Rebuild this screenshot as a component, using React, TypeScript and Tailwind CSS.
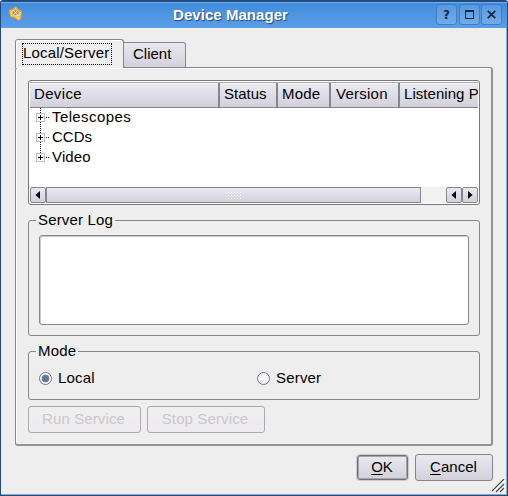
import type { ReactNode } from 'react';

const raised =
  'bg-linear-to-b from-[#e9e9f0] to-[#d2d1db]';

function TitleButton({ children, className = '' }: { children: ReactNode; className?: string }) {
  return (
    <button
      className={`flex h-[21px] w-[21px] items-center justify-center rounded-[3px] border border-[#3f7fc8] bg-linear-to-b from-[#5799e0] to-[#74abe8] ${className}`}
    >
      {children}
    </button>
  );
}

function AppIcon() {
  return (
    <svg width="16" height="17" viewBox="0 0 16 17" className="mt-px ml-[7px]">
      <path d="M1 5 5 3.500 7.500 1 11 4.500 14 6 13.500 13 11 16 6.500 13 2 11.500Z" fill="#f4a231" />
      <path d="m2 6 3-1-.5 4L2.500 10ZM7 3l2.500 2-3 1ZM10.500 6.500l2.500.5-.5 3-2-1ZM6.500 11l4.500.500 1.500 1-1.500 2.500-3-2Z" fill="#ffcc70" />
      <path d="M5 6.500 8 5l2.500 2.500L9 10 5.500 9.500Z" fill="#6f9bc8" />
      <path d="m3 10.500 3.500.5 6-1M5 5l5 5.500M10 5 6 9.500" fill="none" stroke="#ffe1a0" strokeWidth="1" />
    </svg>
  );
}

function Header({ label, width, className = '' }: { label: string; width: string; className?: string }) {
  return (
    <div className={`h-[25px] shrink-0 overflow-hidden whitespace-nowrap border-t border-b border-t-[#f9f9fb] border-b-[#85858b] leading-[20px] ${raised} ${width} ${className}`}>
      {label}
    </div>
  );
}

function TreeRow({ label, last = false, className = '' }: { label: string; last?: boolean; className?: string }) {
  return (
    <div className="flex h-5 items-center">
      <svg width="22" height="20" viewBox="0 0 22 20" shapeRendering="crispEdges">
        <path d={last ? 'M10.5 0v5' : 'M10.5 0v5M10.5 14v6'} stroke="#222" strokeDasharray="1 1" />
        <path d="M16 9.5h3" stroke="#222" strokeDasharray="1 1" />
        <path d="M6 5h9v9H6ZM7 6v7h7V6Z" fill="#bfbfbf" fillRule="evenodd" />
        <path d="M8 9h5v1H8ZM10 7h1v5h-1Z" fill="#000" />
      </svg>
      <span className={`-mt-[2px] leading-5 ${className}`}>{label}</span>
    </div>
  );
}

function ScrollButton({ right = false, className = '' }: { right?: boolean; className?: string }) {
  return (
    <button className={`flex h-4 w-4 shrink-0 items-center justify-center rounded-[2px] border border-[#85858b] ${raised} ${className}`}>
      <svg width="5" height="8" viewBox="0 0 5 8">
        <path d={right ? 'M0 0 4.5 4 0 8Z' : 'M5 0 .5 4 5 8Z'} />
      </svg>
    </button>
  );
}

function Radio({ label, checked = false }: { label: string; checked?: boolean }) {
  return (
    <label className="flex items-center">
      <svg width="13" height="13" viewBox="0 0 13 13">
        <circle cx="6.5" cy="6.5" r="6" fill="#f7f4f8" stroke="#76767d" />
        {checked && <circle cx="6.5" cy="6.5" r="3.7" fill="#62799a" />}
      </svg>
      <span className="ml-[6px] h-5 leading-[19px] tracking-[0.18px]">{label}</span>
    </label>
  );
}

export default function App() {
  return (
    <div className="flex h-[496px] w-[508px] flex-col overflow-hidden rounded-t-[3px] border border-t-2 border-[#204a80] bg-[#eeeeee] font-['Liberation_Sans',Arial,sans-serif] text-[15px] text-black">
      <header className="flex h-[26px] shrink-0 items-start border-t border-[#73ade9] bg-linear-to-b from-[#418cdc] to-[#5c9ee7] pt-px">
        <AppIcon />
        <h1 className="ml-[149px] w-[263px] whitespace-nowrap pt-px text-[15px] leading-5 font-bold tracking-[0.05px] text-white [text-shadow:1px_1px_1px_#204a80]">
          Device Manager
        </h1>
        <TitleButton>
          <span className="font-['DejaVu_Sans'] text-[12px] leading-4 font-bold text-[#102a47]">?</span>
        </TitleButton>
        <TitleButton className="ml-[2px]">
          <svg width="9" height="9" viewBox="0 0 9 9" shapeRendering="crispEdges">
            <path d="M0 0h9v9H0ZM1 2v6h7V2Z" fill="#102a47" fillRule="evenodd" />
          </svg>
        </TitleButton>
        <TitleButton className="ml-px">
          <svg width="9" height="9" viewBox="0 0 9 9">
            <path d="m.8.8 7.4 7.4m0-7.4L.8 8.2" stroke="#102a47" strokeWidth="1.8" />
          </svg>
        </TitleButton>
      </header>

      <div className="flex grow flex-col border-r border-b border-[#8ca9cc] pt-[11px] pl-[14px]">
        <nav className="z-10 flex h-[29px] shrink-0 items-start">
          <div className="h-[29px] w-[109px] rounded-t-[3px] border border-b-0 border-[#85858b] bg-[#eeeeee] pt-[3px] pl-[6px] shadow-[inset_1px_1px_0_#fff]">
            <div className="h-[22px] w-[90px] border border-dotted border-black leading-[18px] whitespace-nowrap tracking-[0.18px]">
              Local/Server
            </div>
          </div>
          <div className={`mt-[3px] h-[26px] w-[62px] rounded-tr-[3px] rounded-bl-[3px] border border-l-0 border-[#85858b] pl-[9px] leading-[22px] ${raised}`}>
            Client
          </div>
        </nav>

        <main className="-mt-px h-[379px] w-[478px] shrink-0 rounded-[3px] border border-r-2 border-b-2 border-[#85858b] border-r-[#929297] border-b-[#929297] pt-3 pl-3 shadow-[inset_1px_1px_0_#fff]">
          <section className="h-[125px] w-[452px] overflow-hidden rounded-[3px] border border-[#77777c] bg-white p-px">
            <div className="flex h-[26px] w-[448px] overflow-hidden border-t border-[#aaaab0] bg-[#85858b]">
              <Header label="Device" width="w-[188px]" className="pl-1 tracking-[0.35px]" />
              <Header label="Status" width="w-[56px]" className="ml-[2px] pl-[4px]" />
              <Header label="Mode" width="w-[51px]" className="ml-[2px] pl-[4px] tracking-[0.15px]" />
              <Header label="Version" width="w-[67px]" className="ml-[2px] pl-[5px] tracking-[0.25px]" />
              <Header label="Listening P" width="w-[78px]" className="ml-[2px] pl-[4px] tracking-[0.05px]" />
            </div>
            <div className="h-[79px]">
              <TreeRow label="Telescopes" className="tracking-[0.4px]" />
              <TreeRow label="CCDs" />
              <TreeRow label="Video" last className="tracking-[0.15px]" />
            </div>
            <div className="flex h-4">
              <ScrollButton className="pr-[2px]" />
              <div className={`flex h-4 w-[375px] items-center justify-center border border-[#85858b] ${raised}`}>
                <div className="h-[9px] w-[14px] bg-[radial-gradient(circle,#fff_0.8px,transparent_1px)] bg-[size:3px_3px]" />
              </div>
              <div className="h-4 w-[25px] bg-[#f1f1f1]" />
              <ScrollButton className="pr-[2px]" />
              <ScrollButton right />
            </div>
          </section>

          <fieldset className="mt-[7px] h-[124px] w-[452px] rounded-[3px] border border-[#85858b]">
            <legend className="ml-[7px] h-[17px] px-[2px] leading-[15px] tracking-[0.15px]">Server Log</legend>
            <div className="mt-[6px] ml-[10px] h-[90px] w-[430px] rounded-[3px] border border-[#85858b] bg-white shadow-[inset_1px_1px_0_#cacad0]" />
          </fieldset>

          <fieldset className="mt-[7px] h-[57px] w-[452px] rounded-[3px] border border-[#85858b]">
            <legend className="ml-[7px] h-[17px] px-[2px] leading-[15px] tracking-[0.15px]">Mode</legend>
            <div className="mt-[8px] ml-[10px] flex">
              <div className="w-[218px]"><Radio label="Local" checked /></div>
              <Radio label="Server" />
            </div>
          </fieldset>

          <div className="mt-[6px] flex gap-[6px] text-[#c8c7ca] [text-shadow:1px_1px_0_#fff]">
            <button disabled className="h-[27px] w-[113px] rounded-[3px] border border-[#aaa9ad] bg-linear-to-b from-[#efeff0] to-[#eeeaee] pr-[2px] pb-px leading-[24px] tracking-[0.12px]">
              Run Service
            </button>
            <button disabled className="h-[27px] w-[118px] rounded-[3px] border border-[#aaa9ad] bg-linear-to-b from-[#efeff0] to-[#eeeaee] pr-[2px] pb-px leading-[24px] tracking-[0.12px]">
              Stop Service
            </button>
          </div>
        </main>

        <footer className="mt-2 flex items-start">
          <button className={`mt-px ml-[342px] h-[25px] w-[51px] rounded-[3px] border border-[#707077] pr-px pb-[2px] leading-[21px] shadow-[0_0_0_1px_#ccccd0,inset_0_0_0_1px_#a4a4ab] ${raised}`}>
            <span className="underline underline-offset-2">O</span>K
          </button>
          <button className={`ml-[7px] h-[27px] w-[78px] rounded-[3px] border border-[#85858b] pr-px pb-px leading-[24px] tracking-[0.05px] ${raised}`}>
            <span className="underline underline-offset-2">C</span>ancel
          </button>
          <svg width="14" height="14" viewBox="0 0 14 14" className="mt-[25px] -ml-px shrink-0">
            <path d="M0 13 12 1M5 13l7-7m-3 7 3-3" stroke="#fff" strokeWidth="2.6" />
            <path d="M0 12 12 0M4 13l8-8m-4 8 4-4" stroke="#444" strokeWidth="1.2" />
          </svg>
        </footer>
      </div>
    </div>
  );
}
